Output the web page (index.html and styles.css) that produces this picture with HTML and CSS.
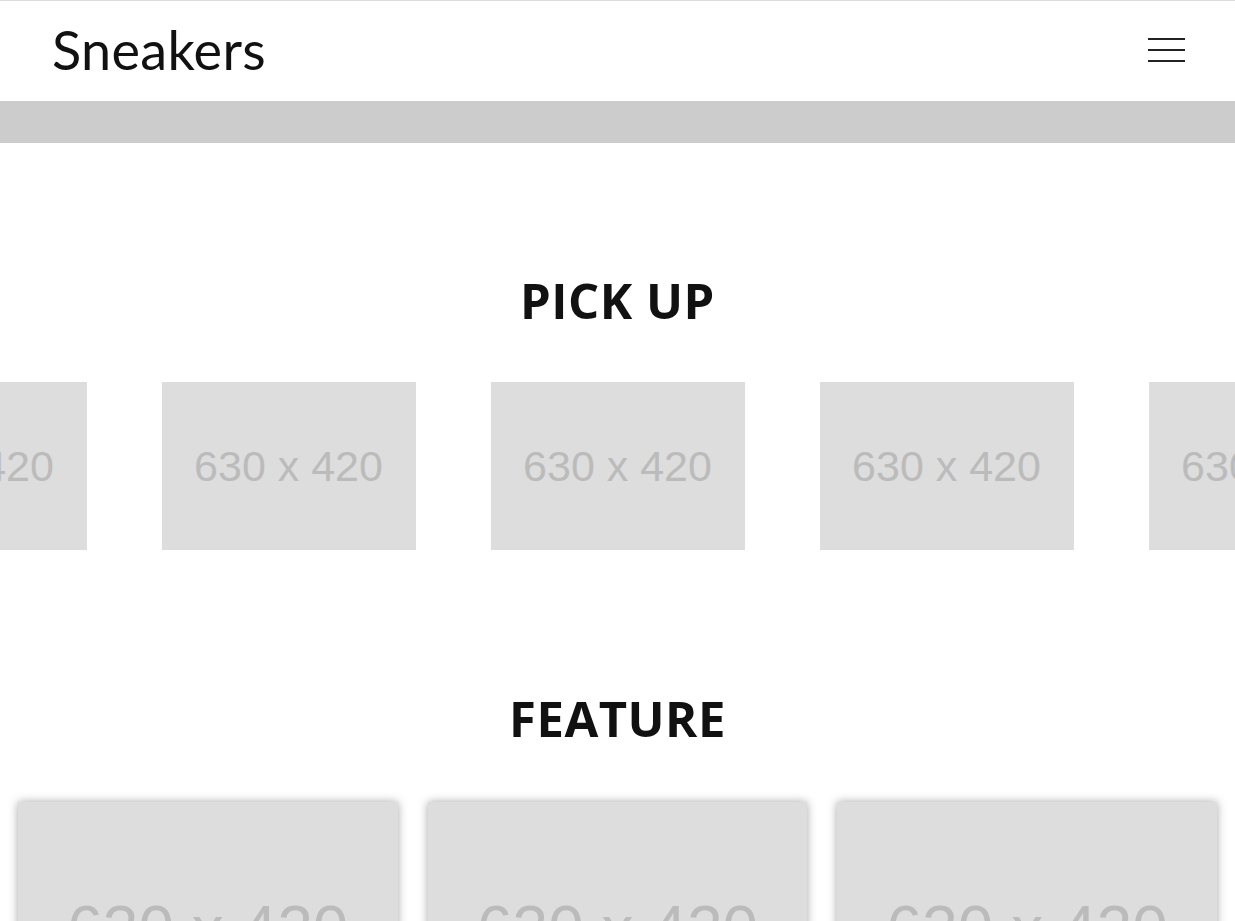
FILE: index.html
```html
<!DOCTYPE html>
<html lang="ja">
<head>
<meta charset="utf-8">
<title>Sneakers</title>
<link rel="stylesheet" href="styles.css">
</head>
<body>
<header class="site-header">
  <h1 class="logo">Sneakers</h1>
  <button class="menu-btn" aria-label="menu">
    <span class="bar"></span><span class="bar"></span><span class="bar"></span>
  </button>
</header>
<div class="band"></div>
<main>
  <section class="pickup">
    <h2 class="section-title">PICK UP</h2>
    <div class="slider">
      <div class="slide ph"><span>630 x 420</span></div>
      <div class="slide ph"><span>630 x 420</span></div>
      <div class="slide ph"><span>630 x 420</span></div>
      <div class="slide ph"><span>630 x 420</span></div>
      <div class="slide ph"><span>630 x 420</span></div>
    </div>
  </section>
  <section class="feature">
    <h2 class="section-title">FEATURE</h2>
    <div class="cards">
      <div class="card ph"><span>630 x 420</span></div>
      <div class="card ph"><span>630 x 420</span></div>
      <div class="card ph"><span>630 x 420</span></div>
    </div>
  </section>
</main>
</body>
</html>
```
FILE: styles.css
```css
* { box-sizing: border-box; }
html, body { margin: 0; padding: 0; }
body {
  background: #fff;
  color: #111;
  font-family: "Open Sans", "Noto Sans CJK JP", sans-serif;
  overflow-x: hidden;
}
.site-header {
  border-top: 1px solid #ddd;
  height: 101px;
  display: flex;
  align-items: center;
  justify-content: space-between;
  padding: 0 50px 0 52px;
}
.logo {
  margin: 0;
  font-family: "Lato", sans-serif;
  font-weight: 400;
  font-size: 54px;
  line-height: 1;
  color: #111;
  margin-top: -3px;
  letter-spacing: 0.3px;
}
.menu-btn {
  width: 37px;
  height: 24px;
  padding: 0;
  border: 0;
  background: none;
  display: flex;
  flex-direction: column;
  justify-content: space-between;
  margin-top: -2px;
}
.menu-btn .bar {
  display: block;
  height: 2px;
  background: #222;
  width: 100%;
}
.band {
  height: 42px;
  background: #ccc;
}
.section-title {
  margin: 0;
  text-align: center;
  font-size: 49px;
  font-weight: 700;
  line-height: 1;
  letter-spacing: 0.5px;
  color: #111;
}
.pickup { padding-top: 133px; }
.pickup .section-title { margin-bottom: 57px; }
.slider {
  display: flex;
  justify-content: center;
  gap: 75px;
  overflow: hidden;
}
.ph {
  background: #ddd;
  color: #bbb;
  display: flex;
  align-items: center;
  justify-content: center;
  font-family: "Liberation Sans", Arial, sans-serif;
}
.slide {
  flex: 0 0 254px;
  height: 168px;
  font-size: 43px;
}
.feature { padding-top: 144px; }
.feature .section-title { margin-bottom: 59px; }
.cards {
  display: flex;
  gap: 30px;
  padding: 0 18px;
}
.card {
  flex: 1 1 0;
  aspect-ratio: 630 / 420;
  font-size: 64px;
  box-shadow: 0 0 9px rgba(0,0,0,0.35);
}
```
